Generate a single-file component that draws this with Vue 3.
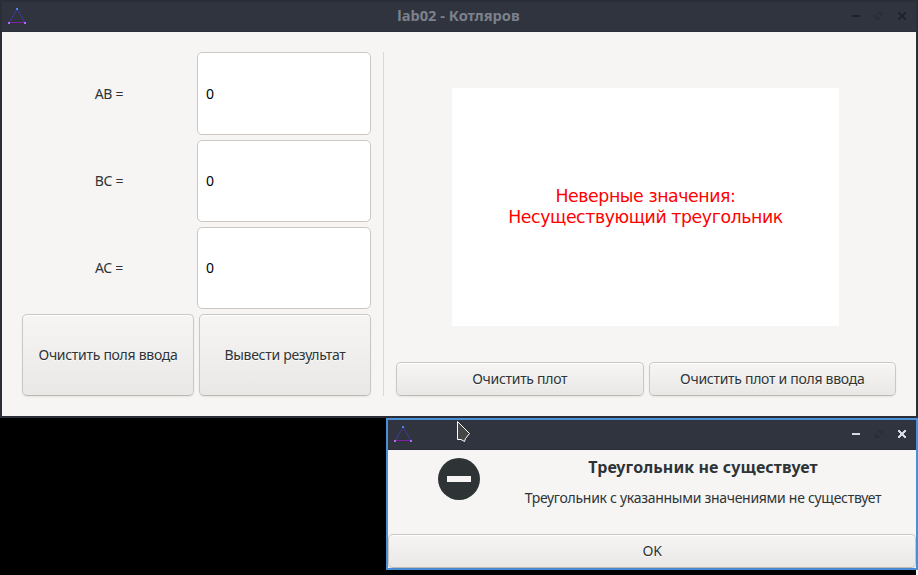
<script setup>
import { ref } from 'vue'

const sides = ref([
  { name: 'AB =', value: '0' },
  { name: 'BC =', value: '0' },
  { name: 'AC =', value: '0' },
])
const title = 'lab02 - Котляров'
</script>

<template>
  <div class="desktop">
    <section class="window">
      <header class="titlebar">
        <svg class="logo" width="20" height="20" viewBox="0 0 20 20">
          <path d="M10 3L2.5 16" stroke="#4a38c4" stroke-dasharray="2 .7" />
          <path d="M10 3L17.5 16" stroke="#4a38c4" stroke-dasharray="2 .7" />
          <path d="M2 16.5H18" stroke="#7d20a4" />
          <path d="M9 2h2v2H9z" fill="#4a86f0" />
          <path d="M1 16h2v2H1zM17 16h2v2h-2z" fill="#b56bee" />
        </svg>
        <h1>{{ title }}</h1>
        <svg class="controls dim" width="56" height="10" viewBox="0 0 56 10">
          <path class="glyph" d="M0 4h8v2H0z" />
          <path class="maximize" d="M25 1h6v6zM23 3v6h6z" />
          <path class="glyph" d="M46 1h2v1h1v1h2V2h1V1h2v2h-1v1h-1v2h1v1h1v2h-2V8h-1V7h-2v1h-1v1h-2V7h1V6h1V4h-1V3h-1z" />
        </svg>
      </header>
      <main class="content">
        <div class="form">
          <div v-for="side in sides" :key="side.name" class="row">
            <label>{{ side.name }}</label>
            <input v-model="side.value" :aria-label="side.name" />
          </div>
          <div class="actions">
            <button>Очистить поля ввода</button>
            <button>Вывести результат</button>
          </div>
        </div>
        <div class="separator"></div>
        <div class="result">
          <div class="plot">
            <p>Неверные значения:</p>
            <p>Несуществующий треугольник</p>
          </div>
          <div class="actions">
            <button>Очистить плот</button>
            <button>Очистить плот и поля ввода</button>
          </div>
        </div>
      </main>
    </section>

    <section class="dialog">
      <header class="titlebar">
        <svg class="logo" width="20" height="20" viewBox="0 0 20 20">
          <path d="M10 3L2.5 16" stroke="#4a38c4" stroke-dasharray="2 .7" />
          <path d="M10 3L17.5 16" stroke="#4a38c4" stroke-dasharray="2 .7" />
          <path d="M2 16.5H18" stroke="#7d20a4" />
          <path d="M9 2h2v2H9z" fill="#4a86f0" />
          <path d="M1 16h2v2H1zM17 16h2v2h-2z" fill="#b56bee" />
        </svg>
        <svg class="controls" width="56" height="10" viewBox="0 0 56 10">
          <path class="glyph" d="M0 4h8v2H0z" />
          <path class="maximize" d="M25 1h6v6zM23 3v6h6z" />
          <path class="glyph" d="M46 1h2v1h1v1h2V2h1V1h2v2h-1v1h-1v2h1v1h1v2h-2V8h-1V7h-2v1h-1v1h-2V7h1V6h1V4h-1V3h-1z" />
        </svg>
      </header>
      <div class="message">
        <svg class="stop" width="42" height="42" viewBox="0 0 42 42">
          <circle cx="21" cy="21" r="21" fill="#2e3436" />
          <path d="M9 18h24v6H9z" fill="#f6f5f4" />
        </svg>
        <div class="texts">
          <h2>Треугольник не существует</h2>
          <p>Треугольник с указанными значениями не существует</p>
        </div>
      </div>
      <button class="ok">OK</button>
    </section>

    <svg class="cursor" width="16" height="24" viewBox="0 0 16 24">
      <path d="M1.5 1.5V19.5H5L8.5 21.5L9.5 18.5L13.5 13.5Z" fill="#464646" stroke="#fff" />
    </svg>
  </div>
</template>

<style>
body {
  background: #000;
}
</style>

<style scoped>
.desktop {
  position: relative;
  width: 918px;
  height: 575px;
  overflow: hidden;
  background: linear-gradient(#f6f5f4, #f6f5f4) right bottom / 2px 5px no-repeat #000;
  font: 14px/18px "Noto Sans", sans-serif;
  letter-spacing: -0.29px;
  color: #2e3436;
}
.desktop * {
  box-sizing: border-box;
}
h1, h2, p {
  margin: 0;
}
.window {
  display: flex;
  flex-direction: column;
  height: 418px;
  border: 2px solid #2b2e37;
}
.titlebar {
  display: flex;
  align-items: center;
  flex: 0 0 30px;
  padding: 0 8px 2px 5px;
  background: #2f343f;
  border-bottom: 1px solid #2b2e39;
}
.titlebar h1 {
  flex: 1;
  padding: 0 0 2px 38px;
  font-size: 14.667px;
  line-height: 20px;
  letter-spacing: 0;
  text-align: center;
  color: #7c818c;
}
.logo {
  fill: none;
}
.controls {
  margin: 1px 0 0 auto;
}
.glyph {
  fill: #d3dae3;
}
.dim .glyph {
  fill: #20232b;
}
.maximize {
  fill: #2b2e37;
}
.content {
  display: flex;
  flex: 1;
  padding: 20px;
  background: #f6f5f4;
}
.form {
  display: grid;
  grid-template-rows: 83px repeat(3, 82px);
  gap: 5px;
  width: 349px;
}
.row {
  display: grid;
  grid-template-columns: 170px 174px;
  gap: 5px;
}
.row label {
  align-self: center;
  padding-left: 4px;
  text-align: center;
}
input {
  width: 100%;
  min-width: 0;
  height: 100%;
  padding: 0 8px 1px;
  border: 1px solid #cdc7c2;
  border-radius: 5px;
  background: #fff;
  font: inherit;
  color: #000;
}
.actions {
  display: grid;
  grid-template-columns: 1fr 1fr;
  gap: 5px;
}
button {
  padding: 0;
  border: 1px solid #cdc7c2;
  border-bottom-color: #bfb8b1;
  border-radius: 5px;
  background: linear-gradient(#f6f5f4, #e9e8e7);
  box-shadow: inset 0 1px #fff, 0 1px 2px rgba(0, 0, 0, 0.07);
  font: inherit;
  letter-spacing: inherit;
  color: #2e3436;
  text-shadow: 0 1px rgba(255, 255, 255, 0.77);
}
.separator {
  width: 1px;
  margin: 0 12px;
  background: #dad8d6;
}
.result {
  display: flex;
  flex: 1;
  flex-direction: column;
  justify-content: space-between;
}
.plot {
  align-self: center;
  width: 387px;
  height: 238px;
  margin: 36px 1px 0 0;
  padding-top: 98px;
  background: #fff;
  font: 17.333px/21px "DejaVu Sans", sans-serif;
  letter-spacing: -0.42px;
  text-align: center;
  color: #f00;
}
.result .actions {
  height: 34px;
}
.dialog {
  position: absolute;
  left: 386px;
  top: 418px;
  display: flex;
  flex-direction: column;
  width: 532px;
  height: 152px;
  border: 2px solid #4a90d9;
  background: #f6f5f4;
}
.message {
  display: flex;
  flex: 1;
  padding: 8px 20px 0 50px;
}
.texts {
  flex: 1;
  padding-left: 30px;
  text-align: center;
}
.texts h2 {
  margin-top: -1px;
  font-size: 16px;
  line-height: 20px;
  letter-spacing: 0.1px;
}
.texts p {
  margin-top: 12px;
}
.ok {
  height: 34px;
}
.cursor {
  position: absolute;
  left: 456px;
  top: 420px;
}
</style>
